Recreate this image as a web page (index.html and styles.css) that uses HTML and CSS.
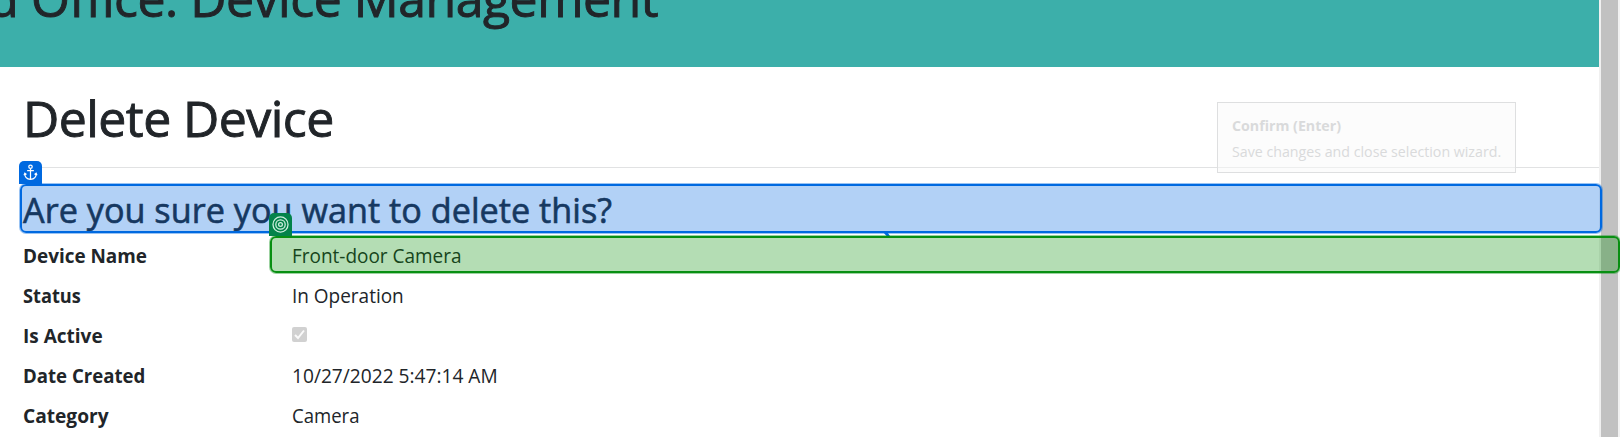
FILE: index.html
```html
<!DOCTYPE html>
<html lang="en">
<head>
<meta charset="utf-8">
<title>Delete Device</title>
<link rel="stylesheet" href="styles.css">
</head>
<body>
<div class="page">
  <header class="banner"><div class="banner-clip"><span class="banner-title">d Office. Device Management</span></div></header>
  <main class="content">
    <h1 class="title"><span>Delete Device</span></h1>
    <hr class="rule">
    <h3 class="question"><span>Are you sure you want to delete this?</span></h3>
    <dl class="details">
      <dt><span class="k1">Device Name</span></dt><dd><span class="v1">Front-door Camera</span></dd>
      <dt><span class="k2">Status</span></dt><dd><span class="v2">In Operation</span></dd>
      <dt><span class="k3">Is Active</span></dt><dd><svg class="check" viewBox="0 0 15 15"><rect width="15" height="15" rx="2" fill="#d1d1d1"/><path d="M3 8l3 3 6-7.500" fill="none" stroke="#fafafa" stroke-width="2"/></svg></dd>
      <dt><span class="k4">Date Created</span></dt><dd><span class="v4">10/27/2022 5:47:14 AM</span></dd>
      <dt><span class="k5">Category</span></dt><dd><span class="v5">Camera</span></dd>
    </dl>
  </main>
</div>
<div class="scrollbar"></div>
<div class="tip"><b class="tip-title">Confirm (Enter)</b><span class="tip-text">Save changes and close selection wizard.</span></div>
<div class="pick anchor"></div>
<div class="tab anchor-tab"><svg viewBox="0 0 23 24" fill="none" stroke="#fff" stroke-width="1.3"><circle cx="11.500" cy="6" r="1.800"/><path d="M11.500 8v11M8 10h7M5.500 13c0 3.500 2.500 5.800 6 6.200 3.500-.4 6-2.700 6-6.200M4.800 14.800l.8-2 1.700 1.300M18.200 14.800l-.8-2-1.700 1.300"/></svg></div>
<div class="notch"></div>
<div class="pick target"></div>
<div class="tab target-tab"><svg viewBox="0 0 22 22" fill="none" stroke="#d0f0e0" stroke-width="1.200"><circle cx="11" cy="11" r="7.200"/><circle cx="11" cy="11" r="4.500"/><circle cx="11" cy="11" r="1.800"/></svg></div>
</body>
</html>
```
FILE: styles.css
```css
* { box-sizing: border-box; }
body {
  margin: 0;
  height: 437px;
  display: flex;
  overflow: hidden;
  background: #fff;
  color: #212529;
  font-family: "Open Sans", "Noto Sans", sans-serif;
}
.page { width: 1599px; height: 437px; overflow: hidden; }
.banner { height: 67px; background: #3cafaa; overflow: hidden; }
.banner-clip { width: 658px; display: flex; justify-content: flex-end; margin-top: -32px; }
.banner-title { font-size: 50px; line-height: 60px; font-weight: 500; white-space: nowrap; letter-spacing: -0.5px; -webkit-text-stroke: 0.9px; }
.content { padding: 21px 0 0 23px; }
.title { margin: 0; height: 79px; font-size: 50px; line-height: 60px; font-weight: 500; letter-spacing: -0.55px; white-space: nowrap; -webkit-text-stroke: 0.9px; }
.rule { margin: 0; border: 0; height: 1px; background: #e1e2e3; }
.question { margin: 21px 0 0; height: 47px; font-size: 35px; line-height: 42px; font-weight: 500; white-space: nowrap; -webkit-text-stroke: 0.6px; }
.details { margin: 0; display: grid; grid-template-columns: 269px 1fr; grid-auto-rows: 40px; font-size: 20px; line-height: 40px; }
.details dt { font-weight: 700; white-space: nowrap; }
.details dd { margin: 0; white-space: nowrap; }
.details span, .question span, .tip-title, .tip-text { display: inline-block; transform-origin: 0 50%; }
.question span { transform: scaleX(.978); }
.k1 { transform: scaleX(.945); }
.k2 { transform: scaleX(.91); }
.k3 { transform: scaleX(.95); }
.k4 { transform: scaleX(.93); }
.k5 { transform: scaleX(.957); }
.v1, .v2 { transform: scaleX(.948); }
.v4 { transform: scaleX(.957); }
.v5 { transform: scaleX(.928); }
.tip-title, .tip-text { transform: scaleX(.947); }
.check { display: block; width: 15px; height: 15px; margin-top: 11px; }
.scrollbar { width: 21px; height: 437px; background: #c1c1c1; border-left: 2px solid #f0f0f0; border-right: 2px solid #f1f1f1; }
.tip {
  position: absolute; left: 1217px; top: 102px; width: 299px; height: 71px;
  padding: 9px 14px; display: flex; flex-direction: column; align-items: flex-start;
  border: 1px solid #dedfe0; background: rgba(249, 249, 249, .5);
  color: #d9dadb; font-size: 15px; line-height: 26px; white-space: nowrap;
}
.pick { position: absolute; border-radius: 6px; }
.anchor { left: 20px; top: 184px; width: 1582px; height: 49px; border: 2px solid #0069e0; background: rgba(0, 104, 224, .3); box-shadow: 0 0 0 1px rgba(0, 105, 224, .4); }
.target { left: 270px; top: 236px; width: 1350px; height: 37px; border: 2px solid #088f12; background: rgba(6, 143, 8, .3); box-shadow: 0 0 0 1px rgba(8, 143, 18, .4); }
.tab { position: absolute; }
.tab svg { display: block; width: 100%; height: 100%; }
.anchor-tab { left: 19px; top: 161px; width: 23px; height: 23px; border-radius: 5px 5px 0 0; background: #0069e0; }
.target-tab { left: 269px; top: 213px; width: 23px; height: 23px; border-radius: 5px 5px 0 0; background: #04834a; }
.notch { position: absolute; left: 883px; top: 232px; width: 7px; height: 4px; background: #0069e0; clip-path: polygon(0 0, 60% 0, 100% 100%, 50% 100%); }
```
